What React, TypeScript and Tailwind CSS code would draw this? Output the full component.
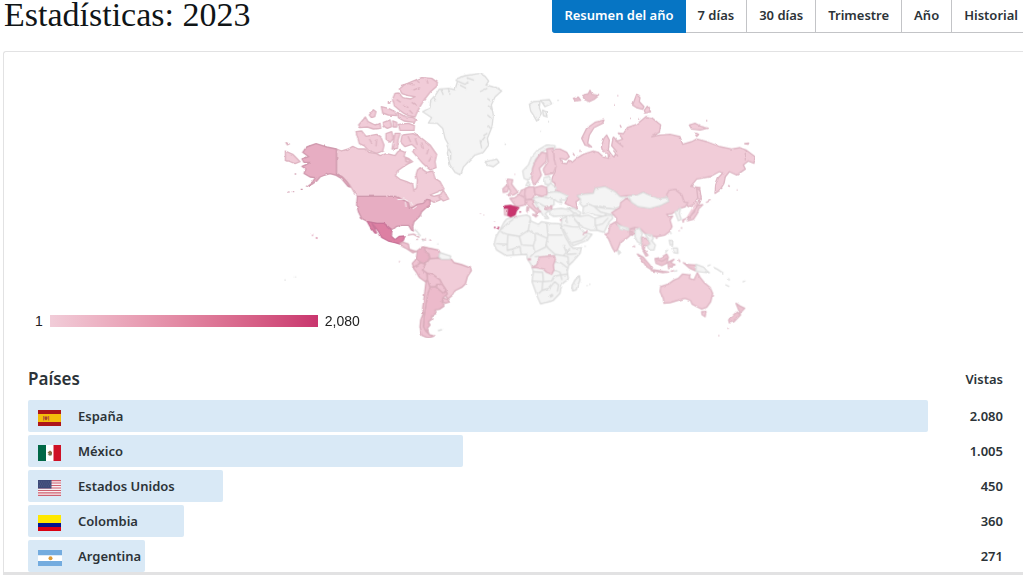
import type { ReactNode } from "react";
import { useState } from "react";

const periods = ["Resumen del año", "7 días", "30 días", "Trimestre", "Año", "Historial"];

type Country = {
  name: string;
  views: number;
  label: string;
  flag: ReactNode;
};

const countries: Country[] = [
  { name: "España", views: 2080, label: "2.080", flag: <SpainFlag /> },
  { name: "México", views: 1005, label: "1.005", flag: <MexicoFlag /> },
  { name: "Estados Unidos", views: 450, label: "450", flag: <UsaFlag /> },
  { name: "Colombia", views: 360, label: "360", flag: <ColombiaFlag /> },
  { name: "Argentina", views: 271, label: "271", flag: <ArgentinaFlag /> },
];

const maxViews = 2080;

function SpainFlag() {
  return (
    <svg className="h-4 w-6" viewBox="0 0 24 16" aria-hidden="true">
      <path fill="#ad1519" d="M0 0h23v16H0z" />
      <path fill="#f4bd0b" d="M0 4h23v8H0z" />
      <path fill="#c0603a" d="M5 6h1.200v4.500H5zM10 6h1.200v4.500H10z" />
      <path fill="#a8452f" d="M6.500 6.500h3v2.500l-1.500 1.500-1.500-1.500z" />
    </svg>
  );
}

function MexicoFlag() {
  return (
    <svg className="h-4 w-6" viewBox="0 0 24 16" aria-hidden="true">
      <path fill="#fff" d="M0 0h23v16H0z" />
      <path fill="#006847" d="M0 0h8v16H0z" />
      <path fill="#ce1126" d="M15.500 0H23v16h-7.500z" />
      <path fill="#8a6a44" d="M9.500 7.500l2.500-2 2 1.500v2.500l-2 .8L9.500 9l1.500-.5z" />
      <path fill="#4f7a55" d="M10 9.500h3.500v.9H11z" />
    </svg>
  );
}

function UsaFlag() {
  return (
    <svg className="h-4 w-6" viewBox="0 0 24 16" aria-hidden="true">
      <path fill="#f6eff1" d="M0 0h23v16H0z" />
      <path
        stroke="#cf5f70"
        strokeWidth="1.100"
        d="M0 .6h23M0 3.060h23M0 5.530h23M0 8h23M0 10.460h23M0 12.920h23M0 15.400h23"
      />
      <path fill="#3c4a78" d="M0 0h13.500v8.500H0z" />
      <path stroke="#6b769b" strokeWidth=".6" strokeDasharray="1 1.200" d="M1 2h12M2 4h11M1 6h12" />
    </svg>
  );
}

function ColombiaFlag() {
  return (
    <svg className="h-4 w-6" viewBox="0 0 24 16" aria-hidden="true">
      <path fill="#ffe800" d="M0 0h23v8H0z" />
      <path fill="#00148e" d="M0 8h23v4H0z" />
      <path fill="#da0010" d="M0 12h23v4H0z" />
    </svg>
  );
}

function ArgentinaFlag() {
  return (
    <svg className="h-4 w-6" viewBox="0 0 24 16" aria-hidden="true">
      <path fill="#fff" d="M0 0h24v16H0z" />
      <path fill="#74acdf" d="M0 0h24v5.300H0zM0 11h24v5H0z" />
      <circle cx="12.500" cy="8.200" r="2" fill="#dd9a35" />
    </svg>
  );
}

function WorldMap() {
  return (
    <svg className="h-[280px] w-[480px]" viewBox="0 0 1440 840" role="img" aria-label="Vistas por país">
      <defs>
        <filter id="coast" x="0" y="0" width="100%" height="100%" colorInterpolationFilters="sRGB">
          <feTurbulence type="fractalNoise" baseFrequency="0.060" numOctaves="2" seed="4" />
          <feDisplacementMap in="SourceGraphic" scale="7" xChannelSelector="R" yChannelSelector="G" />
        </filter>
      </defs>
      <g filter="url(#coast)" strokeWidth="4" strokeLinejoin="round">
        {/* Canada and its arctic islands */}
        <g fill="#f1ccd8" stroke="#deb5c2">
          <path d="M169 252L185 258 205 252 218 244 235 252 255 252 265 262 290 266 300 272 320 266 345 272 352 262 360 256 375 262 372 275 385 280 398 290 385 296 370 305 352 318 346 332 360 343 380 350 398 358 402 378 410 368 412 345 408 330 412 316 420 308 440 322 458 318 465 340 480 350 492 372 475 380 450 390 462 394 478 390 480 405 462 412 452 407 440 410 425 418 408 425 395 430 385 418 372 406 350 394 232 394 220 378 208 358 190 338 169 328Z" />
          <path d="M358 72L372 60 395 50 425 38 455 40 472 52 470 64 450 82 432 105 420 125 412 140 405 156 385 152 372 145 358 135 343 122 338 102 345 85 356 84 368 98 392 102 405 95 385 92 366 86Z" />
          <path d="M362 62L385 55 400 60M400 75L420 68M410 45L418 54M440 44L444 56M370 120L385 128M350 104L362 112M395 112L410 122M388 136L398 146" fill="none" />
          <path d="M355 178L385 175 403 182 402 196 360 196Z" />
          <path d="M352 142L375 155 400 158 408 164 403 172 372 168 355 158Z" />
          <path d="M304 125L325 130 345 140 350 152 325 150 308 144Z" />
          <path d="M268 150L280 134 288 140 284 155 274 158Z" />
          <path d="M236 180L256 156 264 170 285 180 300 175 302 190 280 192 262 186 240 188Z" />
          <path d="M310 172L330 165 335 185 322 190 312 184ZM338 168L350 172 350 186 340 186Z" />
          <path d="M228 200L245 198 258 214 290 208 302 215 312 240 308 258 290 265 265 256 252 242 238 236Z" />
          <path d="M318 206L335 200 340 220 330 232 318 222ZM345 205L360 205 354 225 352 250 336 252 340 230Z" />
          <path d="M366 210L400 206 425 220 450 240 470 268 465 290 468 308 450 315 428 295 405 268 398 260 408 250 395 238 375 245 362 232Z" />
          <path d="M384 214L392 232M405 220L412 240M425 232L430 252M445 252L440 268M455 275L446 290M268 222L276 236M290 222L288 244" fill="none" />
          <path d="M476 396L490 376 506 402 490 408Z" />
          <path d="M325 110h4v5h-4zM376 280L388 284 390 292 378 290Z" />
          <path d="M16 258L38 268 50 280 60 290 45 296 25 288 16 288Z" />
          <path d="M18 233L28 237 22 240Z" />
        </g>

        {/* United States */}
        <g fill="#e7adc2" stroke="#d09aae">
          <path d="M68 262L80 246 108 236 140 246 169 252 169 328 185 334 200 350 210 366 204 364 184 340 166 330 150 326 135 330 120 336 110 348 95 358 80 364 98 350 106 338 90 336 72 325 78 312 66 304 80 298 90 292 72 292 66 282 86 275Z" />
          <path d="M62 373h6M36 380h6M24 381h4M44 327h4" fill="none" />
          <path d="M232 394L345 394 360 400 372 406 385 414 388 430 400 426 412 418 430 415 440 403 450 405 450 420 438 428 425 440 420 452 402 470 398 485 400 498 394 495 386 481 365 481 350 484 338 494 325 486 312 475 290 475 262 469 245 460 235 440 230 420Z" />
          <path d="M352 404L372 402 384 408M376 410L378 426M390 408L398 420M398 432L410 424" stroke="#f8f1f4" strokeWidth="3" fill="none" />
          <path d="M108 517l4 4M96 511h3" fill="none" stroke="#de9bb3" strokeWidth="5" />
        </g>

        {/* Mexico */}
        <path
          fill="#dd80a3"
          stroke="#c9769a"
          d="M262 470L290 475 312 475 325 486 336 496 334 514 345 524 358 514 375 513 370 526 360 537 345 533 325 528 305 517 296 500 280 480 276 476 290 504 285 504 272 488Z"
        />

        {/* Central and South America */}
        <g transform="translate(0 345)" fill="#efc3d2" stroke="#d9adbb">
          <path d="M360 190L368 186 385 192 388 208 400 212 410 214 398 218 380 206 365 198Z" />
          <path d="M383 165L400 162 418 172M425 178L438 180M448 180h6M408 178h6" fill="none" />
          <path d="M412 212L428 200 440 203 435 212 447 222 448 234 438 250 430 250 420 245 408 240 410 228Z" fill="#e9b2c5" />
          <path d="M434 202L455 206 475 210 482 220 475 232 462 238 450 234 447 222 435 214Z" />
          <path d="M408 238L420 246 412 256 400 262 397 250Z" />
          <path d="M398 262L412 256 422 248 436 252 432 262 428 270 440 278 442 298 436 305 418 292 408 275Z" />
          <path
            d="M436 252L450 236 475 234 485 238 508 238 514 238 522 248 545 254 572 264 574 272 562 290 556 312 545 322 525 332 518 345 505 356 494 346 498 330 486 312 480 300 460 285 442 280 428 270Z"
            fill="#f1ccd8"
          />
          <path d="M442 280L460 285 480 300 486 312 470 314 465 322 450 320 442 300Z" />
          <path d="M470 314L486 312 498 330 490 340 470 324Z" />
          <path d="M490 354L503 358 508 366 495 370 488 365Z" />
          <path d="M450 322L466 320 490 340 498 332 502 342 488 354 486 365 492 378 478 388 465 390 468 400 455 408 455 418 445 425 450 435 442 445 446 460 436 452 430 440 432 410 438 370 443 340Z" fill="#ecbacb" />
          <path d="M442 302L450 322 443 340 438 370 432 410 430 440 436 452 448 464 462 468 445 474 425 466 420 440 422 420 430 400 428 385 434 340 438 305Z" />
          <path d="M357 245h3" strokeWidth="5" />
        </g>

        {/* Greenland, Iceland and Svalbard */}
        <g transform="translate(360 0)" fill="#f4f4f4" stroke="#dcdcdc">
          <path d="M68 140L90 128 92 105 108 88 118 72 145 70 165 74 172 50 168 42 195 32 240 25 255 34 266 48 258 60 290 68 305 78 285 96 274 120 280 150 276 185 268 205 262 220 266 240 250 262 225 270 205 290 190 306 182 330 165 322 150 300 142 265 146 240 135 220 128 190 112 175 85 174 95 158Z" />
          <path d="M172 48L195 58 205 50M180 60L198 70M200 38L222 46M240 80L262 70M262 100L272 108M240 235L255 215M245 250L240 225M250 212L262 205M140 240L152 262 152 285M122 72L130 90M145 72L150 86M100 95L108 108M262 150L274 160M262 180L272 190M264 122L276 134" fill="none" />
          <path d="M255 290L275 286 290 282 297 292 280 305 262 300Z" />
          <path d="M388 118L400 110 420 108 418 128 424 145 410 168 400 150 392 138ZM422 106L448 104 455 116 435 125ZM428 135L438 140 441 155 430 152Z" />
          <path d="M314 238h4M444 170h3M420 199h2M472 106h4" />
        </g>

        {/* Russia */}
        <g transform="translate(780 30)" fill="#f1ccd8" stroke="#deb7c4">
          <path d="M40 222L60 222 80 232 88 245 78 254 60 250 66 264 80 266 86 256 96 262 110 250 130 238 160 228 175 232 190 246 206 250 204 236 188 228 184 215 192 190 200 180 208 195 205 225 215 240 222 246 230 230 215 212 220 186 232 198 248 192 235 174 250 176 262 158 290 148 318 125 335 128 350 140 362 150 358 172 335 185 360 180 390 178 420 185 428 208 455 200 470 192 500 200 540 215 575 222 600 218 620 226 645 245 642 265 625 258 610 270 616 282 590 300 568 290 556 305 552 325 540 345 525 355 527 330 535 308 548 294 538 290 510 305 470 312 452 334 480 338 475 365 462 388 445 395 432 380 425 360 405 345 385 355 383 368 355 372 320 358 310 352 290 362 265 362 240 365 225 350 195 335 165 340 160 355 130 358 112 362 120 372 108 380 112 402 95 395 75 385 82 370 60 352 45 345 45 325 35 318 38 305 46 290 42 250Z" />
          <path d="M135 210L125 190 140 160 165 142 192 135 188 145 162 158 148 180 143 205 155 216Z" />
          <path d="M100 70L115 66 122 76 106 78ZM128 62L145 56 150 46 156 58 176 62 164 72 148 80 134 74Z" fill="#e8c0cd" />
          <path d="M278 90L290 58 300 68 298 80 312 95 308 103 290 98ZM313 106L322 94 332 110 316 114Z" />
          <path d="M448 150L465 145 485 155 505 160 480 165 455 162ZM464 175L476 178 470 184ZM614 206L626 204 624 208Z" />
          <path d="M232 62h3M222 90h3M270 130h3M240 150l4 8M498 137h4M564 332l6 2M590 345h3M118 226h4M98 234l6 8M294 132h4" />
          <path d="M470 340L480 346 484 372 478 386 473 366Z" />
          <path d="M616 226V256M226 196L250 216M220 226L234 244" fill="none" />
        </g>

        {/* Gray parts of Europe and Asia */}
        <g transform="translate(600 300)" fill="#f4f4f4" stroke="#dedede">
          <path d="M132 40L128 18 145 0 155 -25 170 -42 200 -60 225 -58 225 -50 205 -50 185 -38 165 -15 158 10 155 35 142 45Z" />
          <path d="M138 62L144 48 150 58 146 66Z" />
          <path d="M192 38L208 34 214 46 212 60 196 58Z" />
          <path d="M200 66L212 54 228 68 226 80 202 82Z" />
          <path d="M200 84L226 80 240 82 262 92 256 106 240 104 246 114 232 110 222 102 198 98Z" />
          <path d="M162 98L185 94 198 98 222 102 222 120 196 126 178 116 162 108Z" />
          <path d="M164 112L180 116 196 126 196 134 206 138 196 146 206 160 196 160 186 146 176 132Z" />
          <path d="M208 138L222 132 245 130 270 134 282 142 278 152 255 152 220 154 210 148Z" />
          <path d="M262 128L282 130 302 142 300 152 282 144Z" />
          <path d="M292 92L310 88 340 85 345 70 375 65 405 80 420 95 440 98 430 115 420 125 400 132 380 130 360 124 340 124 328 118 310 126 300 116 302 102Z" />
          <path d="M310 126L328 118 345 126 360 140 382 146 370 154 345 150 325 142 308 146Z" />
          <path d="M345 126L380 130 400 132 415 136 400 150 382 146 360 140Z" />
          <path d="M276 150L300 154 325 150 345 160 346 180 352 196 332 196 310 188 296 176 284 164Z" />
          <path d="M345 160L375 152 396 150 398 160 388 170 380 186 372 202 352 196 346 180Z" />
          <path d="M346 182L368 176 385 158" fill="none" />
          <path d="M246 160L276 150 284 164 296 178 300 190 318 204 336 208 322 226 280 242 272 234 258 208 244 180Z" />
          <path d="M250 180L275 185 296 186M275 234L305 226 322 210M258 156L262 175" fill="none" />
          <path d="M414 256L422 262 416 268Z" />
        </g>

        {/* Africa */}
        <g transform="translate(600 300)" fill="#f4f4f4" stroke="#dcdcdc">
          <path d="M80 162L105 155 140 150 150 155 152 168 175 178 185 170 212 175 240 176 246 192 256 215 270 240 280 250 305 248 300 265 280 288 266 302 262 320 265 342 245 358 240 385 220 406 182 417 172 395 156 350 160 320 154 300 142 282 140 268 110 270 78 272 50 255 42 238 48 215 60 195 72 172Z" />
          <path
            fill="none"
            d="M60 196L80 178 100 162M62 200L82 208 118 214 145 196 150 165M145 196L165 208 166 222 160 242 125 240 118 214M200 172L204 210 198 240 205 250M204 210L248 210M166 204L202 220M48 236L82 238 84 208M82 238L82 256 98 252 120 244M98 252L100 270M120 244L124 268M160 242L164 262 150 276M164 262L198 246M205 250L225 268 250 272 270 250M250 240L262 268 290 266M250 272L264 275 266 300M225 270L222 290 244 294 264 310M164 275L178 274M158 320L188 322 190 350 156 348M190 350L215 348 222 334 242 330 262 328M188 352L186 376 176 386M186 376L208 370 224 350M222 315L240 322 246 345M224 350L236 360 232 380M212 396L218 392 216 388 210 392Z"
          />
          <path d="M298 332L300 345 288 375 278 378 276 362 285 345Z" />
          <path d="M320 362h3M328 358h3M314 244h3" />
        </g>

        {/* Rest of Asia and Oceania */}
        <g transform="translate(960 315)" fill="#f1ccd8" stroke="#deb7c4">
          <path d="M35 128L60 112 62 98 80 84 95 97 115 110 150 115 180 107 206 95 203 84 200 74 208 60 225 58 245 75 252 96 264 98 256 110 240 115 225 125 213 132 200 132 206 140 218 138 210 150 216 170 208 185 195 195 170 200 150 197 135 190 120 175 105 172 85 178 65 168 48 155 50 145Z" />
          <path d="M12 192L25 190 30 165 45 156 55 168 85 180 105 175 102 192 90 196 80 205 62 215 52 240 45 246 38 235 25 205Z" />
          <path d="M88 182L96 186 98 196 90 194Z" fill="#e8c0cd" />
          <path d="M125 200L138 205 150 215 146 228 135 225 132 240 144 256 138 258 128 240 126 220Z" />
          <path d="M112 252L130 262 152 288 156 300 140 290ZM152 298L190 304 206 306 190 308 155 302ZM165 266L185 262 200 252 205 262 200 280 185 287 168 280Z" fill="#edc4d1" />
          <path d="M206 296L204 276 222 268 212 278 225 284 214 288ZM250 278L265 284 288 285 288 303 268 294ZM236 268L240 276M168 206L172 202M102 226L104 232M212 304L222 302M170 268L186 274 202 264" fill="#edc4d1" />
          <path d="M250 158L248 150 270 140 284 125 288 110 294 104 290 92M294 106L308 104 296 116 292 130 280 148 262 152ZM318 98L332 90M236 182h3M246 172l-3 4" />
          <path d="M182 350L205 342 222 330 235 325 248 312 270 315 268 325 282 330 292 308 300 322 312 337 330 352 338 370 332 395 320 412 305 417 290 410 276 402 272 392 255 385 230 392 210 398 192 400 190 385 180 365Z" />
          <path d="M305 425L318 425 315 440 306 434Z" />
          <path d="M408 400L420 408 434 415 420 430 416 420ZM410 426L422 434 402 455 388 458 386 450Z" fill="#edc4d1" />
          <path d="M382 475h4M355 497h3" />
        </g>

        {/* Mongolia, Nepal and the gray parts of the far east */}
        <g transform="translate(960 315)" fill="#f4f4f4" stroke="#dedede">
          <path d="M85 79L110 76 130 67 140 72 175 86 203 83 206 94 180 107 150 115 115 110 95 97Z" />
          <path d="M54 165L85 174 86 181 60 175Z" />
          <path d="M105 182L118 174 127 190 122 205 124 222 112 215 105 200Z" />
          <path d="M135 192L155 195 160 205 155 212 166 225 162 240 148 240 142 228 150 222 146 208Z" />
          <path d="M225 125L242 114 238 130 244 148 235 152 230 138Z" />
          <path d="M208 210L218 212 218 226 210 224ZM216 234L232 234 234 250 222 248ZM196 248L204 238M211 186L214 192" />
          <path d="M288 283L312 292 320 302 328 308 305 306 288 304Z" />
          <path d="M322 288L332 284M340 292L352 298 370 310M376 344L388 350M428 336L436 332M386 325L388 332M222 304L232 302" fill="none" />
        </g>

        {/* Pink parts of Europe and Africa */}
        <g transform="translate(600 300)" fill="#f1ccd8" stroke="#deb7c4">
          <path d="M155 45L158 10 168 -15 185 -38 200 -35 198 -10 178 10 184 30 172 50 162 60Z" />
          <path d="M200 -48L220 -50 222 -20 228 5 220 25 196 30 190 12 204 -10Z" />
          <path d="M80 42L98 44 95 58 106 72 114 82 100 90 82 92 92 80 84 62Z" />
          <path d="M68 72L80 60 86 70 82 80 70 82Z" />
          <path d="M90 100L105 98 118 88 130 95 138 105 134 120 116 124 106 122Z" />
          <path d="M118 88L124 76 136 72 138 92 130 95Z" />
          <path d="M136 70L148 66 162 66 165 88 156 102 138 104 134 88Z" />
          <path d="M163 68L185 62 200 68 201 88 186 94 165 88Z" />
          <path d="M134 106L154 103 162 108 158 116 166 128 182 140 174 142 172 152 166 140 150 126 140 118Z" />
          <path d="M141 126L146 128 144 142 140 138ZM158 148L170 150 168 156Z" />
          <path d="M196 125L216 123 215 132 198 133Z" />
          <path d="M73 130L85 130 82 151 74 150Z" />
          <path d="M178 276L200 274 222 272 226 284 220 300 222 315 215 328 200 322 190 312 170 308 156 307 170 300 174 290Z" />
          <path d="M145 281h6v4h-6zM308 206L320 202 322 196M242 160v8M104 28h2M74 76h2" />
        </g>
        <g transform="translate(600 300)" fill="#c9356e" stroke="#bb3f70" strokeWidth="2">
          <path d="M73 122L92 120 118 128 110 138 106 150 92 156 83 152 85 130 73 130Z" />
          <path d="M43 186h3v3h-3zM54 186h3v3h-3zM119 140h3v2h-3z" />
        </g>
        <g transform="translate(600 300)" stroke="#e3c2cd" strokeWidth="3">
          <path d="M0 146h3M10 150h3M42 170h3" />
        </g>

        {/* Small gray islands of the Americas */}
        <g transform="translate(0 345)" fill="#f4f4f4" stroke="#dcdcdc">
          <path d="M480 218L512 228 510 238 485 238 476 230Z" />
          <path d="M474 452L486 449M404 148L412 156 422 168M13 300h4M45 291h3M424 180L432 182M472 192h3" fill="none" />
        </g>
      </g>
    </svg>
  );
}

export default function App() {
  const [period, setPeriod] = useState(periods[0]);

  return (
    <main className="overflow-x-clip bg-white font-['Noto_Sans',sans-serif] text-[#2c3338]">
      <header className="flex h-[51px] items-start justify-between pl-1">
        <h1 className="font-['Liberation_Serif',serif] text-[34px] leading-[30px] whitespace-nowrap text-[#101517]">
          Estadísticas: 2023
        </h1>
        <nav className="-mr-2 flex shrink-0" aria-label="Periodo">
          {periods.map((item) => (
            <button
              key={item}
              type="button"
              aria-pressed={item === period}
              onClick={() => setPeriod(item)}
              className={
                item === period
                  ? "h-[33px] rounded-bl-[3px] border-b border-[#0675c4] bg-[#0675c4] px-3 text-[13px] font-semibold whitespace-nowrap text-white"
                  : "h-[33px] border-r border-b border-[#c3c4c7] bg-white px-3 text-[13px] font-semibold whitespace-nowrap text-[#2c3338]"
              }
            >
              {item}
            </button>
          ))}
        </nav>
      </header>

      <section className="ml-[3px] rounded-tl-[3px] border-t border-b-[3px] border-l border-[#e2e2e3] pr-5 pl-6">
        <div className="flex items-end pt-[13px]">
          <div className="mb-[14px] flex w-[252px] shrink-0 items-center gap-[7px] pl-[7px] font-['Liberation_Sans',sans-serif] text-sm leading-5 text-[#222]">
            <span>1</span>
            <span className="relative z-10 h-3 w-[268px] shrink-0 bg-linear-to-r from-[#f1ccd8] to-[#c9356e]" />
            <span className="relative z-10">2,080</span>
          </div>
          <WorldMap />
        </div>

        <table className="w-full table-fixed border-collapse text-[13px] font-semibold">
          <thead>
            <tr className="h-[55px]">
              <th scope="col" className="p-0 pb-2 text-left align-bottom text-[17px] leading-[26px] font-semibold">
                Países
              </th>
              <th scope="col" className="w-[75px] p-0 pb-2 text-right align-bottom leading-[26px] font-semibold">
                Vistas
              </th>
            </tr>
          </thead>
          <tbody>
            {countries.map((country) => (
              <tr key={country.name} className="h-[35px] last:h-8">
                <td className="p-0 align-top">
                  <div
                    className="flex h-8 items-center gap-4 rounded-[2px] bg-[#d9e9f6] pl-[10px] whitespace-nowrap"
                    style={{ width: `${(country.views / maxViews) * 100}%` }}
                  >
                    <span className="shrink-0 pt-1">{country.flag}</span>
                    <span className="pt-[2px]">{country.name}</span>
                  </div>
                </td>
                <td className="p-0 text-right align-top leading-8">{country.label}</td>
              </tr>
            ))}
          </tbody>
        </table>
      </section>
    </main>
  );
}
